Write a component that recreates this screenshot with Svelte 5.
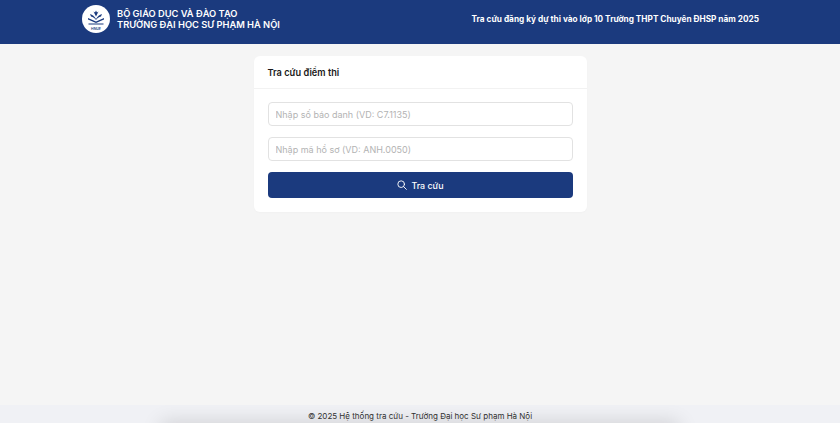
<script lang="ts">
  let sbd = $state('');
  let hoSo = $state('');
</script>

<div class="page">
  <header class="header">
    <div class="brand">
      <div class="logo">
        <svg width="28" height="28" viewBox="0 0 28 28">
          <path d="M14 14C12.500 11.500 10.500 9.500 8 9L9 11.500C11 12 12.800 13.200 14 15C15.200 13.200 17 12 19 11.500L20 9C17.500 9.500 15.500 11.500 14 14Z" fill="#1b3a7e" />
          <path d="M14 11.500L11.500 6.500L13 7.500L14 5.500L15 7.500L16.500 6.500Z" fill="#1b3a7e" />
          <path d="M6 13L14 16.500L22 13V14.500L14 18L6 14.500Z" fill="#1b3a7e" />
          <rect x="6.500" y="18.500" width="15" height="1" fill="#1b3a7e" />
          <text x="14" y="24.500" text-anchor="middle" class="logo-text">HNUE</text>
        </svg>
      </div>
      <div class="brand-text">
        <div>BỘ GIÁO DỤC VÀ ĐÀO TẠO</div>
        <div>TRƯỜNG ĐẠI HỌC SƯ PHẠM HÀ NỘI</div>
      </div>
    </div>
    <div class="header-title">Tra cứu đăng ký dự thi vào lớp 10 Trường THPT Chuyên ĐHSP năm 2025</div>
  </header>

  <main class="main">
    <section class="card">
      <div class="card-head">Tra cứu điểm thi</div>
      <form class="card-body" onsubmit={(e) => e.preventDefault()}>
        <input class="field" bind:value={sbd} placeholder="Nhập số báo danh (VD: C7.1135)" />
        <input class="field" bind:value={hoSo} placeholder="Nhập mã hồ sơ (VD: ANH.0050)" />
        <button class="submit" type="submit">
          <svg width="10" height="10" viewBox="0 0 24 24" fill="none" stroke="currentColor" stroke-width="2.200" stroke-linecap="round">
            <circle cx="10" cy="10" r="8" />
            <path d="M16 16l6.500 6.500" />
          </svg>
          <span>Tra cứu</span>
        </button>
      </form>
    </section>
  </main>

  <footer class="footer">© 2025 Hệ thống tra cứu - Trường Đại học Sư phạm Hà Nội</footer>
</div>

<style>
  :global(body) {
    margin: 0;
    background: #f5f5f5;
    font-family: Inter, "Noto Sans", sans-serif;
  }

  .page {
    height: 423px;
    display: flex;
    flex-direction: column;
    overflow: hidden;
  }

  .header {
    height: 44px;
    box-sizing: border-box;
    background: #1b3a7e;
    color: #fff;
    display: flex;
    justify-content: space-between;
    padding: 5px 81px 0 82px;
    flex-shrink: 0;
  }

  .brand {
    display: flex;
    gap: 7px;
    align-items: flex-start;
  }

  .logo {
    width: 28px;
    height: 28px;
    border-radius: 50%;
    background: #fff;
  }

  .logo svg {
    display: block;
  }

  .logo-text {
    font-size: 3.500px;
    font-weight: 600;
    fill: #1b3a7e;
  }

  .brand-text {
    font-size: 9.300px;
    font-weight: 600;
    line-height: 11px;
    padding-top: 3px;
  }

  .header-title {
    font-size: 8.250px;
    font-weight: 700;
    line-height: 12px;
    padding-top: 8px;
  }

  .main {
    flex: 1;
    display: flex;
    justify-content: center;
    align-items: flex-start;
    padding-top: 12px;
  }

  .card {
    width: 333px;
    background: #fff;
    border-radius: 6px;
    box-shadow: 0 1px 2px rgba(0, 0, 0, 0.02);
  }

  .card-head {
    height: 33px;
    box-sizing: border-box;
    padding: 10px 14px 0;
    font-size: 9.200px;
    font-weight: 600;
    line-height: 13px;
    color: #1a1a1a;
    border-bottom: 1px solid #f2f2f2;
  }

  .card-body {
    display: flex;
    flex-direction: column;
    gap: 11px;
    padding: 13px 14px 14px;
  }

  .field {
    height: 24px;
    box-sizing: border-box;
    border: 1px solid #e2e2e2;
    border-radius: 4px;
    padding: 0 7px;
    font: 400 9px Inter, "Noto Sans", sans-serif;
    background: #fff;
    outline: none;
  }

  .field::placeholder {
    color: #b3b3b3;
  }

  .submit {
    height: 26px;
    border: 0;
    border-radius: 4px;
    padding: 0 0 0 1px;
    background: #1b3a7e;
    color: #fff;
    display: flex;
    align-items: center;
    justify-content: center;
    gap: 4px;
    font: 500 8.900px Inter, "Noto Sans", sans-serif;
  }

  .footer {
    position: relative;
    height: 18px;
    flex-shrink: 0;
    background: #f0f1f5;
    text-align: center;
    font-size: 8px;
    line-height: 22px;
    color: #333;
    overflow: hidden;
  }

  .footer::after {
    content: '';
    position: absolute;
    left: 165px;
    right: 165px;
    bottom: -12px;
    height: 8px;
    box-shadow: 0 0 20px 4px rgba(0, 0, 0, 0.16);
  }
</style>
